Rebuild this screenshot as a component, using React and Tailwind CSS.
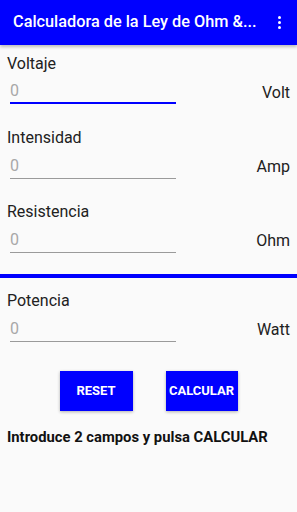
import { useState } from 'react';

const fields = [
  { label: 'Voltaje', unit: 'Volt', focused: true },
  { label: 'Intensidad', unit: 'Amp' },
  { label: 'Resistencia', unit: 'Ohm' },
];

function Field({ label, unit, focused }) {
  return (
    <div className="h-[74px]">
      <p className="pl-[7px] text-[16px] leading-[24px] text-[#212121]">{label}</p>
      <div className="mt-[4px] flex items-start pr-[7px]">
        {focused ? (
          <div className="ml-[10px] w-[166px] border-b-2 border-[#0000ff] text-[16px] leading-[22px] text-[#a8a8a8]">0</div>
        ) : (
          <div className="ml-[10px] w-[166px] border-b border-[#9a9a9a] text-[16px] leading-[24px] text-[#a8a8a8]">0</div>
        )}
        <span className="ml-auto pt-[1px] text-[16px] leading-[24px] text-[#212121]">{unit}</span>
      </div>
    </div>
  );
}

export default function App() {
  const [msg] = useState('Introduce 2 campos y pulsa CALCULAR');

  return (
    <div className="h-[512px] w-[297px] overflow-hidden bg-[#fafafa]" style={{ fontFamily: 'Roboto, "Noto Sans", sans-serif' }}>
      <header className="flex h-[45px] items-center bg-[#0000ff] pl-[13px] pr-[16px] shadow-[0_2px_3px_rgba(0,0,0,0.25)]">
        <h1 className="min-w-0 flex-1 whitespace-nowrap text-[16.3px] font-medium text-white">Calculadora de la Ley de Ohm &amp;...</h1>
        <div className="ml-auto flex flex-col items-center gap-[2px]">
          <span className="h-[3px] w-[3px] rounded-full bg-white" />
          <span className="h-[3px] w-[3px] rounded-full bg-white" />
          <span className="h-[3px] w-[3px] rounded-full bg-white" />
        </div>
      </header>

      <div className="pt-[7px]">
        {fields.map(f => (
          <Field key={f.label} {...f} />
        ))}
      </div>

      <div className="h-[4px] bg-[#0000ff]" />

      <div className="pt-[11px]">
        <Field label="Potencia" unit="Watt" />
      </div>

      <div className="mt-[8px] flex justify-center gap-[33px]">
        <button className="h-[40px] w-[73px] bg-[#0000ff] text-[13px] font-bold text-white shadow-[0_1px_3px_rgba(0,0,0,0.3)]">RESET</button>
        <button className="h-[40px] w-[72px] bg-[#0000ff] text-[13px] font-bold text-white shadow-[0_1px_3px_rgba(0,0,0,0.3)]">CALCULAR</button>
      </div>

      <p className="mt-[16px] pl-[7px] text-[14.8px] font-bold leading-[20px] text-[#111]">{msg}</p>
    </div>
  );
}
